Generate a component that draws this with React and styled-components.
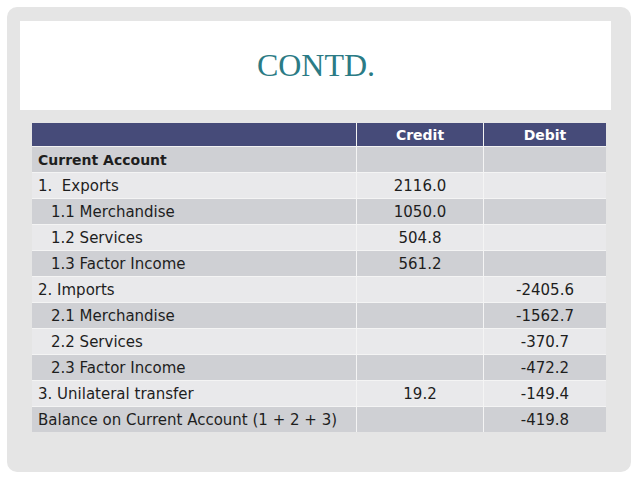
import React from "react";
import styled, { createGlobalStyle } from "styled-components";

const GlobalStyle = createGlobalStyle`
  html, body {
    margin: 0;
    padding: 0;
    background: #ffffff;
  }
`;

const rows = [
  { label: "Current Account", bold: true, credit: "", debit: "" },
  { label: "1.\u00a0\u00a0Exports", credit: "2116.0", debit: "" },
  { label: "1.1 Merchandise", indent: true, credit: "1050.0", debit: "" },
  { label: "1.2 Services", indent: true, credit: "504.8", debit: "" },
  { label: "1.3 Factor Income", indent: true, credit: "561.2", debit: "" },
  { label: "2. Imports", credit: "", debit: "-2405.6" },
  { label: "2.1 Merchandise", indent: true, credit: "", debit: "-1562.7" },
  { label: "2.2 Services", indent: true, credit: "", debit: "-370.7" },
  { label: "2.3 Factor Income", indent: true, credit: "", debit: "-472.2" },
  { label: "3. Unilateral transfer", credit: "19.2", debit: "-149.4" },
  { label: "Balance on Current Account (1 + 2 + 3)", credit: "", debit: "-419.8" },
];

export default function App() {
  return (
    <>
      <GlobalStyle />
      <Page>
        <Slide>
          <TitleBox>
            <Title>CONTD.</Title>
          </TitleBox>
          <Table>
            <thead>
              <tr>
                <HeadCell />
                <HeadCell>Credit</HeadCell>
                <HeadCell>Debit</HeadCell>
              </tr>
            </thead>
            <tbody>
              {rows.map((r, i) => (
                <Row key={i} dark={i % 2 === 0}>
                  <LabelCell bold={r.bold} indent={r.indent}>
                    {r.label}
                  </LabelCell>
                  <NumCell>{r.credit}</NumCell>
                  <NumCell>{r.debit}</NumCell>
                </Row>
              ))}
            </tbody>
          </Table>
        </Slide>
      </Page>
    </>
  );
}

const Page = styled.div`
  width: 638px;
  height: 479px;
  padding: 7px;
  box-sizing: border-box;
  background: #ffffff;
`;

const Slide = styled.div`
  width: 624px;
  height: 465px;
  box-sizing: border-box;
  padding: 14px 20px 0 13px;
  background: #e5e5e5;
  border-radius: 10px;
  display: flex;
  flex-direction: column;
`;

const TitleBox = styled.div`
  height: 89px;
  background: #ffffff;
  display: flex;
  align-items: center;
  justify-content: center;
`;

const Title = styled.h1`
  margin: 0;
  font-family: "Liberation Serif", serif;
  font-weight: normal;
  font-size: 32px;
  color: #2b7b85;
  padding-left: 1px;
`;

const Table = styled.table`
  margin: 13px 0 0 12px;
  width: 574px;
  border-collapse: collapse;
  font-family: "DejaVu Sans", sans-serif;
  font-size: 15px;
  color: #1e1e1e;
  table-layout: fixed;
`;

const HeadCell = styled.th`
  height: 23px;
  padding: 0;
  background: #464b79;
  color: #ffffff;
  font-size: 14px;
  font-weight: bold;
  text-align: center;
  border: 1px solid #f2f2f2;
  border-top: none;

  &:first-child {
    width: 324px;
    border-left: none;
  }
  &:nth-child(2) {
    width: 126px;
  }
  &:last-child {
    border-right: none;
  }
`;

const Row = styled.tr`
  background: ${(p) => (p.dark ? "#cfd0d4" : "#e9e9eb")};
`;

const LabelCell = styled.td`
  height: 25px;
  padding: 0 0 0 ${(p) => (p.indent ? "19px" : "6px")};
  font-weight: ${(p) => (p.bold ? "bold" : "normal")};
  font-size: ${(p) => (p.bold ? "14px" : "15px")};
  border-top: 1px solid #f4f4f4;
  border-right: 1px solid #f4f4f4;
  white-space: nowrap;
`;

const NumCell = styled.td`
  height: 25px;
  padding: 0;
  text-align: center;
  border-top: 1px solid #f4f4f4;
  border-right: 1px solid #f4f4f4;

  &:last-child {
    border-right: none;
  }
`;
